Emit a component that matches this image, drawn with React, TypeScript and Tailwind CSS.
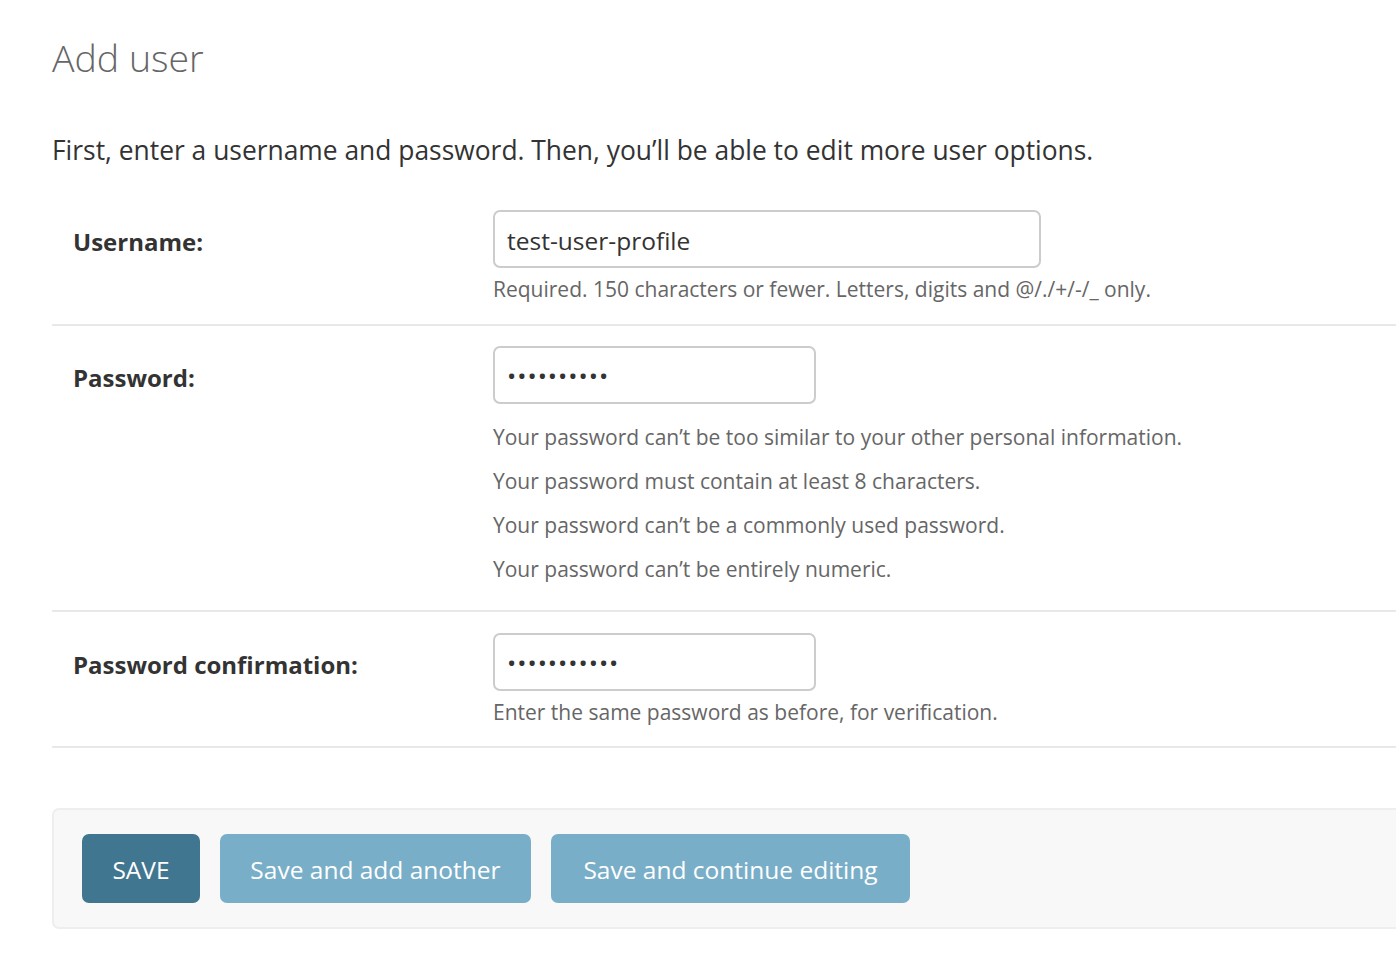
const FONT = "font-['Open_Sans','Noto_Sans',sans-serif]";

function HelpLine({ children }: { children: React.ReactNode }) {
  return <div className="text-[21px] leading-[28px] text-[#666]">{children}</div>;
}

export default function App() {
  return (
    <div className={`min-h-screen overflow-x-hidden bg-white ${FONT} text-[#333]`}>
      <div className="pl-[52px] pt-[30px]">
        <h1 className="text-[37.5px] font-light leading-[56px] text-[#666]">Add user</h1>

        <p className="mt-[48px] text-[26.4px] leading-[32px]">
          First, enter a username and password. Then, you’ll be able to edit more user options.
        </p>

        <div className="mt-[22px]">
          <div className="flex border-b-2 border-[#e8e8e8] pb-[21px] pl-[21px] pt-[22px]">
            <label className="w-[420px] shrink-0 pt-[3px] text-[24px] font-bold leading-[58px]">Username:</label>
            <div>
              <input
                type="text"
                defaultValue="test-user-profile"
                className="h-[58px] w-[548px] rounded-[7px] border-2 border-[#ccc] px-[12px] pt-[2px] text-[24.5px] text-[#333] outline-none"
              />
              <div className="mt-[7px]">
                <HelpLine>Required. 150 characters or fewer. Letters, digits and @/./+/-/_ only.</HelpLine>
              </div>
            </div>
          </div>

          <div className="flex border-b-2 border-[#e8e8e8] pb-[19px] pl-[21px] pt-[20px]">
            <label className="w-[420px] shrink-0 pt-[3px] text-[24px] font-bold leading-[58px]">Password:</label>
            <div>
              <input
                type="password"
                defaultValue="abcdefghij"
                className="h-[58px] w-[323px] rounded-[7px] border-2 border-[#ccc] px-[12px] text-[24.5px] tracking-[1px] text-[#333] outline-none"
              />
              <ul className="mt-[11px]">
                {[
                  'Your password can’t be too similar to your other personal information.',
                  'Your password must contain at least 8 characters.',
                  'Your password can’t be a commonly used password.',
                  'Your password can’t be entirely numeric.',
                ].map((t) => (
                  <li key={t} className="text-[21px] leading-[44px] text-[#666]">
                    {t}
                  </li>
                ))}
              </ul>
            </div>
          </div>

          <div className="flex border-b-2 border-[#e8e8e8] pb-[20px] pl-[21px] pt-[21px]">
            <label className="w-[420px] shrink-0 pt-[3px] text-[24px] font-bold leading-[58px]">
              Password confirmation:
            </label>
            <div>
              <input
                type="password"
                defaultValue="abcdefghijk"
                className="h-[58px] w-[323px] rounded-[7px] border-2 border-[#ccc] px-[12px] text-[24.5px] tracking-[1px] text-[#333] outline-none"
              />
              <div className="mt-[7px]">
                <HelpLine>Enter the same password as before, for verification.</HelpLine>
              </div>
            </div>
          </div>
        </div>

        <div className="-mr-[40px] mt-[60px] flex gap-[20px] rounded-[7px] border-2 border-[#eee] bg-[#f8f8f8] px-[28px] py-[24px]">
          <button className="h-[69px] w-[118px] rounded-[7px] bg-[#417690] pt-[3px] text-[24.5px] text-white">
            SAVE
          </button>
          <button className="h-[69px] w-[311px] rounded-[7px] bg-[#79aec8] pt-[3px] text-[24.5px] text-white">
            Save and add another
          </button>
          <button className="h-[69px] w-[359px] rounded-[7px] bg-[#79aec8] pt-[3px] text-[24.5px] text-white">
            Save and continue editing
          </button>
        </div>
      </div>
    </div>
  );
}
